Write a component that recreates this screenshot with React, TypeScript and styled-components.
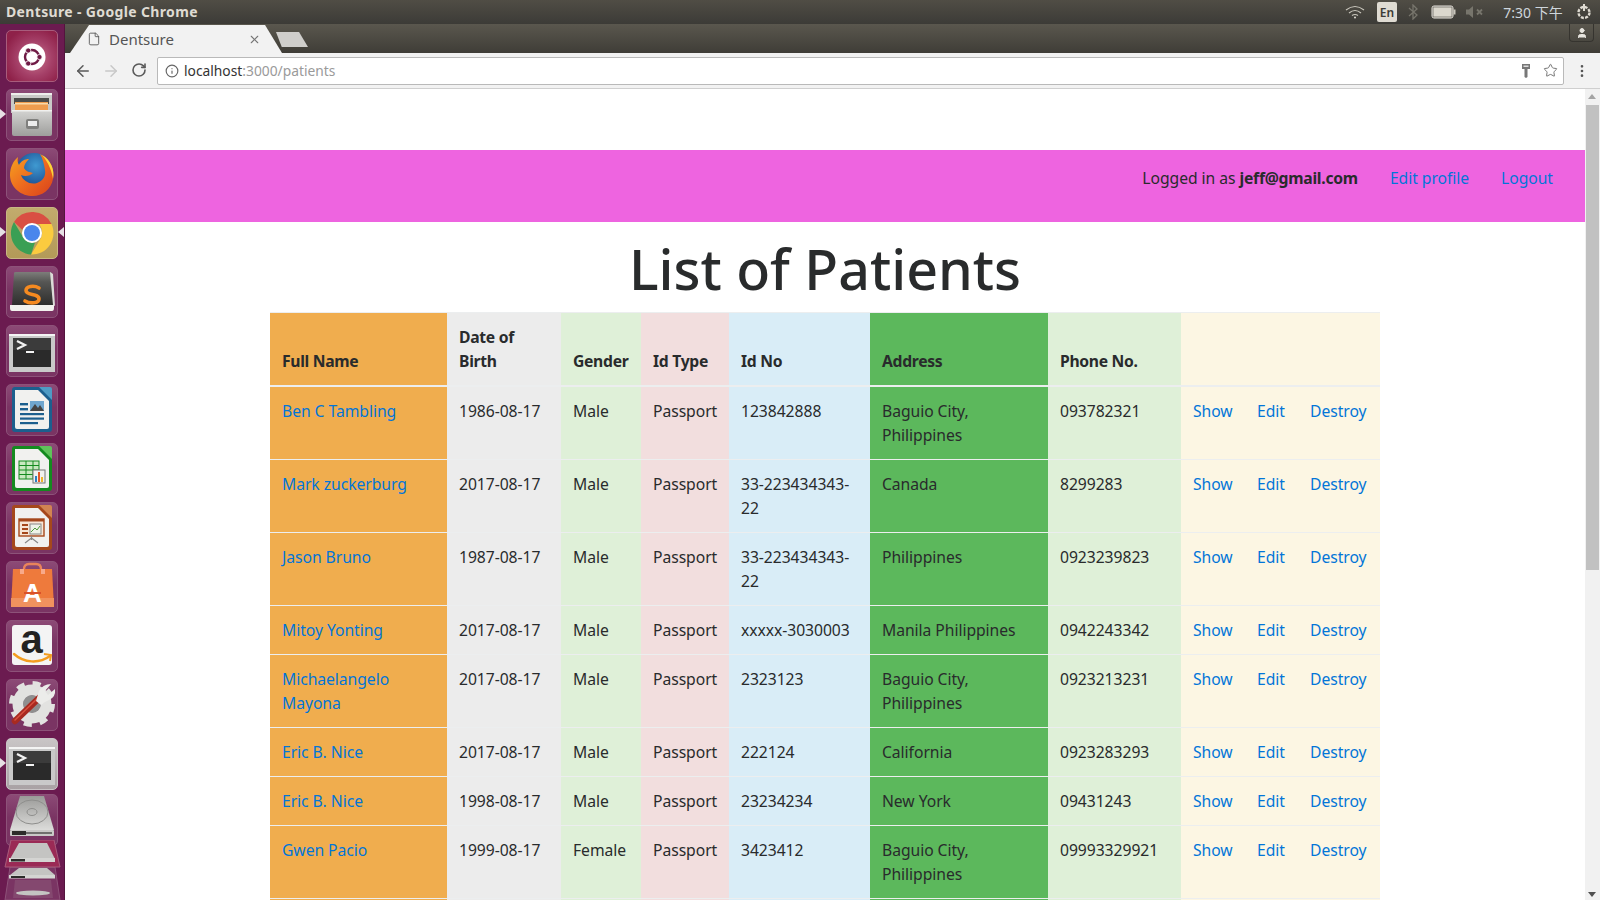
import React from "react";
import styled, {createGlobalStyle, css} from "styled-components";
import {ArrowLeft, ArrowRight, RotateCw, Info, Star, X, MoreVertical, File, User} from "lucide-react";

const uiFont = `"Noto Sans", "Open Sans", sans-serif`;

const GlobalStyle = createGlobalStyle`
  html, body {
    margin: 0;
    padding: 0;
    background: #fff;
  }
  * {
    box-sizing: border-box;
  }
`

const Screen = styled.div`
  width: 1600px;
  height: 900px;
  overflow: hidden;
  display: flex;
  flex-direction: column;
  font-family: ${uiFont};
`

const TopPanel = styled.div`
  height: 24px;
  flex: none;
  display: flex;
  align-items: center;
  justify-content: space-between;
  padding-left: 6px;
  background: linear-gradient(#504d45, #3c3b37);
  color: #dfdbd2;
`

const WindowTitle = styled.div`
  font-size: 14px;
  font-weight: 700;
  letter-spacing: 0.35px;
  padding-bottom: 2px;
`

const Indicators = styled.div`
  display: flex;
  align-items: center;
  height: 24px;
`

const Indicator = styled.div<{ $width: number }>`
  width: ${p => p.$width}px;
  display: flex;
  align-items: center;
  justify-content: center;
`

const LangBox = styled.div`
  width: 20px;
  height: 20px;
  border-radius: 2px;
  background: #dfdbd2;
  color: #3c3b37;
  font-size: 12px;
  font-weight: 600;
  display: flex;
  align-items: center;
  justify-content: center;
`

const Clock = styled.div`
  width: 83px;
  padding-left: 13px;
  font-size: 14px;
  color: #cfd6dc;
  font-family: "Noto Sans", "Noto Sans CJK TC", sans-serif;
  text-align: center;
  white-space: nowrap;
`

const Desktop = styled.div`
  flex: 1;
  min-height: 0;
  display: flex;
`

const Launcher = styled.div`
  width: 65px;
  flex: none;
  background: #6b1b50;
  border-right: 1px solid #54143e;
  display: flex;
  flex-direction: column;
  gap: 7px;
  padding: 6px 0 0 6px;
  overflow: hidden;
`

const tileTones = {
    plain: css`
      background: linear-gradient(#8c4a76, #7a3463 45%, #7a3463);
      border: 1px solid #8d5279;
    `,
    ubuntu: css`
      background: radial-gradient(circle at 55% 55%, #c9788f, #a54068 45%, #8f2149 80%);
      border: 1px solid #a85c7c;
    `,
    gold: css`
      background: linear-gradient(#c2ab6d, #b39a58);
      border: 1px solid #c8b684;
    `,
    active: css`
      background: linear-gradient(#c9c5c6, #a9a2a4);
      border: 1px solid #c9c5c6;
    `,
}

const Tile = styled.div<{ $tone?: keyof typeof tileTones; $left?: boolean; $right?: boolean; $tight?: boolean }>`
  position: relative;
  width: 52px;
  height: 52px;
  flex: none;
  border-radius: 5px;
  margin-top: ${p => p.$tight ? "-3px" : "0"};
  ${p => tileTones[p.$tone ?? "plain"]}
  svg {
    display: block;
    position: absolute;
    left: -1px;
    top: -1px;
    overflow: visible;
  }
  ${p => p.$left && css`
    &::before {
      content: "";
      position: absolute;
      left: -7px;
      top: 19px;
      border: 5px solid transparent;
      border-left: 6px solid #e6e0e4;
    }
  `}
  ${p => p.$right && css`
    &::after {
      content: "";
      position: absolute;
      right: -7px;
      top: 19px;
      border: 5px solid transparent;
      border-right: 6px solid #e6e0e4;
    }
  `}
`

const FoldedStack = styled.svg`
  display: block;
  flex: none;
  position: relative;
  margin: -13px 0 0 -3px;
`

const Browser = styled.div`
  flex: 1;
  min-width: 0;
  display: flex;
  flex-direction: column;
`

const TabStrip = styled.div`
  position: relative;
  height: 29px;
  flex: none;
  display: flex;
  align-items: flex-end;
  padding-left: 5px;
  background: linear-gradient(#5a574e, #3f3d37);
`

const Tab = styled.div`
  width: 212px;
  height: 28px;
  display: flex;
  align-items: center;
  padding: 0 21px 0 17px;
  background: #f2f2f2;
  clip-path: polygon(0 100%, 9% 0, 92% 0, 100% 100%);
  color: #555;
  font-size: 15px;
  gap: 8px;
`

const TabTitle = styled.span`
  flex: 1;
`

const NewTab = styled.div`
  width: 32px;
  height: 15px;
  margin: 0 0 6px -6px;
  background: #cfcecb;
  clip-path: polygon(0 0, 72% 0, 100% 100%, 18% 100%);
`

const ProfileButton = styled.div`
  position: absolute;
  right: 6px;
  top: 0;
  width: 25px;
  height: 18px;
  border: 1px solid #36342f;
  border-top: none;
  border-radius: 0 0 4px 4px;
  color: #e8e6e0;
  display: flex;
  align-items: center;
  justify-content: center;
`

const Toolbar = styled.div`
  height: 36px;
  flex: none;
  display: flex;
  align-items: center;
  background: #f2f2f2;
  border-bottom: 1px solid #cfcfcf;
`

const NavButton = styled.div<{ $off?: boolean }>`
  width: 28px;
  display: flex;
  justify-content: center;
  color: ${p => p.$off ? "#c8c8c8" : "#5a5a5a"};
`

const NavButtons = styled.div`
  display: flex;
  padding-left: 4px;
  width: 92px;
  flex: none;
`

const Omnibox = styled.div`
  width: 1407px;
  height: 28px;
  flex: none;
  display: flex;
  align-items: center;
  background: #fff;
  border: 1px solid #b9b9b9;
  border-radius: 2px;
  padding: 0 5px 0 7px;
  font-size: 13.8px;
  color: #9a9a9a;
  gap: 5px;
`

const UrlText = styled.div`
  flex: 1;
`

const UrlHost = styled.span`
  color: #333;
`

const KeySlot = styled.div`
  display: flex;
  margin-right: 7px;
`

const MenuButton = styled.div`
  flex: 1;
  display: flex;
  justify-content: center;
  color: #555;
`

const Viewport = styled.div`
  flex: 1;
  min-height: 0;
  display: flex;
`

const Page = styled.div`
  flex: 1;
  min-width: 0;
  padding-top: 61px;
  overflow: hidden;
  color: #292b2c;
  font-size: 15.7px;
  letter-spacing: -0.05px;
  line-height: 24px;
`

const Navbar = styled.nav`
  height: 72px;
  background: #ee64e0;
  display: flex;
  justify-content: flex-end;
  gap: 32px;
  padding: 16px 32px 0 0;
`

const NavText = styled.span`
  strong {
    font-weight: 700;
    letter-spacing: -0.25px;
  }
`

const Link = styled.a`
  color: #0275d8;
  text-decoration: none;
`

const Heading = styled.h1`
  margin: 0;
  height: 90px;
  padding-top: 16px;
  font-size: 55.5px;
  line-height: 62px;
  font-weight: 500;
  letter-spacing: 0;
  text-align: center;
`

const Table = styled.table`
  margin-left: 205px;
  width: 1110px;
  table-layout: fixed;
  border-collapse: collapse;
  border-top: 1px solid #eceeef;
`

const cellTones = {
    orange: "#f0ad4e",
    grey: "#ececec",
    green: "#dff0d8",
    red: "#f2dede",
    blue: "#d9edf7",
    strong: "#5cb85c",
    cream: "#fcf6e3",
}

type Tone = keyof typeof cellTones;

const Col = styled.col<{ $width: number }>`
  width: ${p => p.$width}px;
`

const HeadCell = styled.th<{ $tone: Tone }>`
  padding: 12px;
  text-align: left;
  vertical-align: bottom;
  font-weight: 700;
  letter-spacing: -0.3px;
  background: ${p => cellTones[p.$tone]};
  border-bottom: 2px solid #eceeef;
`

const Cell = styled.td<{ $tone: Tone }>`
  padding: 12px;
  height: 49px;
  vertical-align: top;
  background: ${p => cellTones[p.$tone]};
  border-top: 1px solid #eceeef;
`

const Scrollbar = styled.div`
  width: 15px;
  flex: none;
  background: #f1f1f1;
  display: flex;
  flex-direction: column;
  align-items: center;
  padding-top: 16px;
  position: relative;
`

const ScrollThumb = styled.div`
  width: 13px;
  height: 465px;
  background: #c1c1c1;
`

const ScrollArrow = styled.div<{ $down?: boolean }>`
  position: absolute;
  left: 3px;
  border: 4px solid transparent;
  ${p => p.$down
    ? css`
      bottom: 3px;
      border-top: 5px solid #505050;
      border-bottom: none;
    `
    : css`
      top: 5px;
      border-bottom: 5px solid #a3a3a3;
      border-top: none;
    `}
`

const columns = [177, 114, 80, 88, 141, 178, 133, 64, 53, 82];
const rowTones: Tone[] = ["orange", "grey", "green", "red", "blue", "strong", "green", "cream", "cream", "cream"];

const patients = [
    {id: 1, name: "Ben C Tambling", dob: "1986-08-17", gender: "Male", idNo: "123842888", address: "Baguio City, Philippines", phone: "093782321"},
    {id: 2, name: "Mark zuckerburg", dob: "2017-08-17", gender: "Male", idNo: "33-223434343-22", address: "Canada", phone: "8299283"},
    {id: 3, name: "Jason Bruno", dob: "1987-08-17", gender: "Male", idNo: "33-223434343-22", address: "Philippines", phone: "0923239823"},
    {id: 4, name: "Mitoy Yonting", dob: "2017-08-17", gender: "Male", idNo: "xxxxx-3030003", address: "Manila Philippines", phone: "0942243342"},
    {id: 5, name: "Michaelangelo Mayona", dob: "2017-08-17", gender: "Male", idNo: "2323123", address: "Baguio City, Philippines", phone: "0923213231"},
    {id: 6, name: "Eric B. Nice", dob: "2017-08-17", gender: "Male", idNo: "222124", address: "California", phone: "0923283293"},
    {id: 7, name: "Eric B. Nice", dob: "1998-08-17", gender: "Male", idNo: "23234234", address: "New York", phone: "09431243"},
    {id: 8, name: "Gwen Pacio", dob: "1999-08-17", gender: "Female", idNo: "3423412", address: "Baguio City, Philippines", phone: "09993329921"},
];

const UbuntuIcon = () => (
    <svg width="52" height="52" viewBox="0 0 52 52">
        <circle cx="26" cy="27" r="13.500" fill="#fff"/>
        <circle cx="26" cy="27" r="7" fill="none" stroke="#6f1a45" strokeWidth="2.400"/>
        <circle cx="33.500" cy="27" r="2.600" fill="#6f1a45" stroke="#fff" strokeWidth="0.800"/>
        <circle cx="22.200" cy="20.500" r="2.600" fill="#6f1a45" stroke="#fff" strokeWidth="0.800"/>
        <circle cx="22.200" cy="33.500" r="2.600" fill="#6f1a45" stroke="#fff" strokeWidth="0.800"/>
    </svg>
);

const FilesIcon = () => (
    <svg width="52" height="52" viewBox="0 0 52 52">
        <defs>
            <linearGradient id="cabinetFront" x1="0" y1="0" x2="0" y2="1">
                <stop offset="0" stopColor="#d4d4d2"/>
                <stop offset="1" stopColor="#9e9e9c"/>
            </linearGradient>
        </defs>
        <path d="M5 6 Q5 4 7 4 H44 Q46 4 46 6 V24 H5 Z" fill="#c9c9c7"/>
        <rect x="5" y="4" width="41" height="2" fill="#eeeeec"/>
        <rect x="8" y="9" width="35" height="6" fill="#4c4c4a"/>
        <rect x="9" y="13" width="33" height="8" fill="#ee9c4e"/>
        <rect x="9" y="14" width="33" height="1.500" fill="#f8d8a8"/>
        <path d="M6 21 H46 V45 Q46 47 44 47 H8 Q6 47 6 45 Z" fill="url(#cabinetFront)"/>
        <rect x="6" y="21" width="40" height="1.500" fill="#f0f0ee"/>
        <rect x="20" y="30" width="13" height="10" rx="2" fill="#7f7f7d"/>
        <rect x="22" y="32" width="9" height="5" fill="#ededed"/>
    </svg>
);

const FirefoxIcon = () => (
    <svg width="52" height="52" viewBox="0 0 52 52">
        <defs>
            <radialGradient id="foxGlobe" cx="0.55" cy="0.35" r="0.7">
                <stop offset="0" stopColor="#3f9ad1"/>
                <stop offset="1" stopColor="#153f86"/>
            </radialGradient>
            <linearGradient id="foxBody" x1="0" y1="0" x2="1" y2="1">
                <stop offset="0" stopColor="#f6a61f"/>
                <stop offset="0.5" stopColor="#ee6b1f"/>
                <stop offset="1" stopColor="#d8401b"/>
            </linearGradient>
        </defs>
        <circle cx="28" cy="23" r="18" fill="url(#foxGlobe)"/>
        <path d="M34 6 C44 11 49 21 47 31 C45 42 35 49 25 48 C13 47 4 38 4 27 C4 20 7 13 12 9 C11 13 12 15 13 17 C15 13 19 11 23 11 C20 14 18 17 18 20 C20 24 24 24 27 25 C24 28 19 29 15 27 C17 33 24 37 31 35 C37 33 40 28 39 22 C38 16 37 11 34 6 Z" fill="url(#foxBody)"/>
        <path d="M36 7 C45 12 49 22 47 31 C46 24 43 15 36 7 Z" fill="#fbd33a"/>
    </svg>
);

const ChromeIcon = () => (
    <svg width="52" height="52" viewBox="0 0 52 52">
        <path d="M8 15 A21.500 21.500 0 0 1 45.500 17 L26 17 C21 17 17.500 20 16.500 23 Z" fill="#d94f43"/>
        <path d="M45.500 17 A21.500 21.500 0 0 1 25 47.500 L35 31 C37 27 36.500 21 33 17 Z" fill="#fbcb3f"/>
        <path d="M25 47.500 A21.500 21.500 0 0 1 8 15 L17.500 31 C20 35 25 36.500 29 35.500 Z" fill="#3a9f54"/>
        <circle cx="26" cy="26" r="10" fill="#fff"/>
        <circle cx="26" cy="26" r="8" fill="#4a86ec"/>
    </svg>
);

const SublimeIcon = () => (
    <svg width="52" height="52" viewBox="0 0 52 52">
        <defs>
            <linearGradient id="sublimeBox" x1="0" y1="0" x2="0" y2="1">
                <stop offset="0" stopColor="#7d7d7a"/>
                <stop offset="0.3" stopColor="#565654"/>
                <stop offset="1" stopColor="#2e2e2d"/>
            </linearGradient>
        </defs>
        <path d="M8 7 Q8 6 10 6 H44 Q46 6 46 8 L47 39 H6 Z" fill="url(#sublimeBox)"/>
        <path d="M44 6 L47 8 L49 40 L47 39 Z" fill="#dcdcd8"/>
        <path d="M4 39 H48 V42 Q48 45 46 45 H6 Q4 45 4 42 Z" fill="#f2f2ee"/>
        <path d="M33 22 C28 19 20 20 20 24.500 C20 30 33 27 33 33 C33 37.500 24 38 19 35" fill="none" stroke="#f58a20" strokeWidth="3.600" strokeLinecap="round"/>
    </svg>
);

const TerminalIcon = () => (
    <svg width="52" height="52" viewBox="0 0 52 52">
        <rect x="3" y="9" width="46" height="38" fill="#c9c9c9"/>
        <rect x="3" y="9" width="46" height="2" fill="#f4f4f4"/>
        <rect x="7" y="13" width="38" height="29" fill="#2a2a2a"/>
        <rect x="7" y="13" width="38" height="12" fill="#3b3b3b"/>
        <path d="M11 16 L19 20 L11 24" fill="none" stroke="#f2f2f2" strokeWidth="2.200"/>
        <rect x="20" y="26" width="8" height="2" fill="#f2f2f2"/>
    </svg>
);

const OfficeDoc = ({frame, corner, children}: { frame: string; corner: string; children?: React.ReactNode }) => (
    <svg width="52" height="52" viewBox="0 0 52 52">
        <path d="M6 6 Q6 3 9 3 H34 L46 15 V45 Q46 48 43 48 H9 Q6 48 6 45 Z" fill={frame}/>
        <path d="M33 3 H44 Q46 3 46 5 V16 Z" fill={corner}/>
        <path d="M9 6 H32 L43 17 V43 Q43 45 41 45 H11 Q9 45 9 43 Z" fill="#f1f1ef"/>
        {children}
    </svg>
);

const WriterIcon = () => (
    <OfficeDoc frame="#1c5f8e" corner="#4f9bc4">
        <rect x="14" y="19" width="8" height="2.400" fill="#1c5f8e"/>
        <rect x="14" y="24" width="8" height="2.400" fill="#1c5f8e"/>
        <rect x="14" y="29" width="24" height="2.200" fill="#1c5f8e"/>
        <rect x="14" y="33.500" width="24" height="2.200" fill="#1c5f8e"/>
        <rect x="14" y="38" width="18" height="2.200" fill="#1c5f8e"/>
        <rect x="24" y="17" width="14" height="10" fill="#6fa6cf"/>
        <path d="M24 27 L29 20 L32 24 L34 21 L38 27 Z" fill="#444"/>
    </OfficeDoc>
);

const CalcIcon = () => (
    <OfficeDoc frame="#148a1f" corner="#5fc25a">
        <rect x="13" y="18" width="20" height="18" fill="#c9e8c0" stroke="#148a1f"/>
        <path d="M13 22.500 H33 M13 27 H33 M13 31.500 H33 M20 18 V36 M27 18 V36" stroke="#148a1f"/>
        <rect x="27" y="27" width="12" height="13" fill="#f1f1ef" stroke="#777"/>
        <rect x="29" y="33" width="2" height="6" fill="#2a7fc2"/>
        <rect x="32" y="29" width="2" height="10" fill="#e2592b"/>
        <rect x="35" y="34" width="2" height="5" fill="#f0b429"/>
    </OfficeDoc>
);

const ImpressIcon = () => (
    <OfficeDoc frame="#a5481c" corner="#d18452">
        <rect x="13" y="17" width="25" height="17" fill="#f7e6d6" stroke="#a5481c" strokeWidth="1.400"/>
        <rect x="13" y="17" width="25" height="2.500" fill="#a5481c"/>
        <rect x="16" y="22" width="6" height="2" fill="#a5481c"/>
        <rect x="16" y="26" width="6" height="2" fill="#a5481c"/>
        <rect x="16" y="30" width="6" height="2" fill="#a5481c"/>
        <rect x="24" y="22" width="11" height="10" fill="#eef3e8" stroke="#888"/>
        <path d="M25 30 L29 26 L31 28 L34 24" fill="none" stroke="#4f9a3a"/>
        <path d="M25.500 34 V38 M25.500 36 L19 41 M25.500 36 L32 41" stroke="#888" strokeWidth="1.200" fill="none"/>
    </OfficeDoc>
);

const SoftwareIcon = () => (
    <svg width="52" height="52" viewBox="0 0 52 52">
        <path d="M18 12 V8 Q18 3 23 3 H30 Q35 3 35 8 V12" fill="none" stroke="#e9835a" strokeWidth="2.400"/>
        <path d="M7 8 H46 L48 46 H5 Z" fill="#ee7a3c"/>
        <rect x="5" y="37" width="43" height="9" fill="#f0925e"/>
        <rect x="14" y="8" width="4" height="5" fill="#f8a98a"/>
        <rect x="35" y="8" width="4" height="5" fill="#f8a98a"/>
        <text x="26.500" y="41" textAnchor="middle" fontFamily="'Liberation Sans', sans-serif" fontWeight="700" fontSize="26" fill="#fff">A</text>
        <rect x="18" y="31" width="17" height="2" fill="#d9522a"/>
    </svg>
);

const AmazonIcon = () => (
    <svg width="52" height="52" viewBox="0 0 52 52">
        <rect x="6" y="5" width="40" height="40" rx="3" fill="#f4f4f4"/>
        <text x="25.500" y="33" textAnchor="middle" fontFamily="'Liberation Sans', sans-serif" fontWeight="700" fontSize="40" fill="#222">a</text>
        <path d="M8 34 C18 43 33 44 44 36" fill="none" stroke="#f39c1f" strokeWidth="2.400" strokeLinecap="round"/>
        <path d="M38 34 L45 35 L44 41" fill="none" stroke="#f39c1f" strokeWidth="2"/>
    </svg>
);

const SettingsIcon = () => (
    <svg width="52" height="52" viewBox="0 0 52 52">
        <circle cx="26" cy="25" r="14" fill="none" stroke="#e2e2e0" strokeWidth="11"/>
        <circle cx="26" cy="25" r="20.500" fill="none" stroke="#e2e2e0" strokeWidth="5" strokeDasharray="8 8.100"/>
        <circle cx="26" cy="25" r="9" fill="#8f8f8f"/>
        <path d="M9 42 L33 19" stroke="#a82a20" strokeWidth="6.500" strokeLinecap="round"/>
        <path d="M9 41 L33 18" stroke="#d8503e" strokeWidth="1.500" strokeLinecap="round"/>
        <path d="M30 22 L33 12 Q37 5 45 5 L39 12 L42 16 L49 10 Q50 18 43 21 Q38 23 35 26 Z" fill="#ececea"/>
    </svg>
);

const DiskIcon = () => (
    <svg width="52" height="52" viewBox="0 0 52 52">
        <defs>
            <linearGradient id="diskTop" x1="0" y1="0" x2="0" y2="1">
                <stop offset="0" stopColor="#9a9a98"/>
                <stop offset="1" stopColor="#dcdcda"/>
            </linearGradient>
        </defs>
        <path d="M14 2 H38 L48 36 H4 Z" fill="url(#diskTop)"/>
        <ellipse cx="26" cy="18" rx="16" ry="12" fill="none" stroke="#8e8e8c"/>
        <ellipse cx="26" cy="18" rx="5" ry="3.500" fill="none" stroke="#8e8e8c"/>
        <rect x="4" y="36" width="44" height="6" rx="1" fill="#c9c9c7"/>
        <rect x="6" y="37" width="14" height="4" fill="#2c2c2a"/>
        <rect x="20" y="38" width="26" height="2" fill="#6f6f6d"/>
    </svg>
);

const Folded = () => (
    <FoldedStack width="62" height="60" viewBox="0 0 62 60">
        <path d="M2 60 L7 27 H52 L57 60 Z" fill="#7a3463" stroke="#8d5279"/>
        <path d="M8 0 H51 L57 27 H2 Z" fill="#9a2a55" stroke="#a85c7c"/>
        <path d="M16 3 H44 L52 19 H7 Z" fill="#c4c4c2"/>
        <rect x="6" y="18" width="46" height="4" fill="#d4d4d2"/>
        <rect x="8" y="19" width="14" height="2.500" fill="#2c2c2a"/>
        <path d="M16 28 H44 L52 35 H7 Z" fill="#c4c4c2"/>
        <rect x="6" y="35" width="46" height="3.500" fill="#d4d4d2"/>
        <rect x="8" y="36" width="14" height="2" fill="#2c2c2a"/>
        <path d="M12 40 H48 L50 58 H10 Z" fill="#84486f"/>
        <ellipse cx="30" cy="53" rx="17" ry="2.500" fill="#c4c4c2"/>
    </FoldedStack>
);

const launcherItems: Array<{ key: string; tone?: keyof typeof tileTones; left?: boolean; right?: boolean; tight?: boolean; icon: React.ReactElement }> = [
    {key: "ubuntu", tone: "ubuntu", icon: <UbuntuIcon/>},
    {key: "files", left: true, icon: <FilesIcon/>},
    {key: "firefox", icon: <FirefoxIcon/>},
    {key: "chrome", tone: "gold", left: true, right: true, icon: <ChromeIcon/>},
    {key: "sublime", icon: <SublimeIcon/>},
    {key: "terminal", icon: <TerminalIcon/>},
    {key: "writer", icon: <WriterIcon/>},
    {key: "calc", icon: <CalcIcon/>},
    {key: "impress", icon: <ImpressIcon/>},
    {key: "software", icon: <SoftwareIcon/>},
    {key: "amazon", icon: <AmazonIcon/>},
    {key: "settings", icon: <SettingsIcon/>},
    {key: "terminal2", tone: "active", left: true, icon: <TerminalIcon/>},
    {key: "disk", tight: true, icon: <DiskIcon/>},
];

const WifiGlyph = () => (
    <svg width="20" height="14" viewBox="0 0 20 14" fill="none" stroke="#c9c6bc" strokeWidth="1.200">
        <path d="M1 5 Q10 -2 19 5"/>
        <path d="M4 8 Q10 3 16 8"/>
        <path d="M7 10.500 Q10 8.500 13 10.500"/>
        <circle cx="10" cy="12.500" r="1" fill="#dfdbd2" stroke="none"/>
    </svg>
);

const BluetoothGlyph = () => (
    <svg width="10" height="16" viewBox="0 0 10 16" fill="none" stroke="#77756c" strokeWidth="1.300">
        <path d="M1 4 L9 11 L5 15 V1 L9 5 L1 12"/>
    </svg>
);

const BatteryGlyph = () => (
    <svg width="25" height="14" viewBox="0 0 25 14">
        <rect x="1" y="1" width="21" height="12" rx="2" fill="#dfdbd2" stroke="#e8e5dd"/>
        <rect x="2" y="2" width="19" height="10" fill="#dbd7cd" stroke="#4a4842" strokeWidth="0.600"/>
        <rect x="22.500" y="4.500" width="2" height="5" fill="#c9c6bc"/>
    </svg>
);

const MuteGlyph = () => (
    <svg width="18" height="12" viewBox="0 0 18 12" fill="#77756c">
        <path d="M0 3.500 H3 L7 0 V12 L3 8.500 H0 Z"/>
        <path d="M11 3.500 L16 8.500 M16 3.500 L11 8.500" stroke="#77756c" strokeWidth="1.800"/>
    </svg>
);

const PowerGlyph = () => (
    <svg width="18" height="18" viewBox="0 0 18 18" fill="none" stroke="#dfdbd2">
        <circle cx="9" cy="9.500" r="5.500" strokeWidth="2.400" strokeDasharray="3 1.300"/>
        <path d="M9 1 V8" strokeWidth="2"/>
    </svg>
);

const KeyGlyph = () => (
    <svg width="10" height="16" viewBox="0 0 10 16">
        <path d="M1 1 H9 V6 H6.500 V14 L5 15 L3.500 14 V6 H1 Z" fill="#777"/>
        <rect x="2.500" y="2.500" width="5" height="1.500" fill="#ddd"/>
    </svg>
);

export default function App() {
    return (
        <>
            <GlobalStyle/>
            <Screen>
                <TopPanel>
                    <WindowTitle>Dentsure - Google Chrome</WindowTitle>
                    <Indicators>
                        <Indicator $width={28}><WifiGlyph/></Indicator>
                        <Indicator $width={36}><LangBox>En</LangBox></Indicator>
                        <Indicator $width={16}><BluetoothGlyph/></Indicator>
                        <Indicator $width={44}><BatteryGlyph/></Indicator>
                        <Indicator $width={20}><MuteGlyph/></Indicator>
                        <Clock>7:30 下午</Clock>
                        <Indicator $width={32}><PowerGlyph/></Indicator>
                    </Indicators>
                </TopPanel>
                <Desktop>
                    <Launcher>
                        {launcherItems.map(item => (
                            <Tile key={item.key} $tone={item.tone} $left={item.left} $right={item.right} $tight={item.tight}>
                                {item.icon}
                            </Tile>
                        ))}
                        <Folded/>
                    </Launcher>
                    <Browser>
                        <TabStrip>
                            <Tab>
                                <File size={14} strokeWidth={1.5}/>
                                <TabTitle>Dentsure</TabTitle>
                                <X size={13} color="#777"/>
                            </Tab>
                            <NewTab/>
                            <ProfileButton><User size={12} fill="currentColor"/></ProfileButton>
                        </TabStrip>
                        <Toolbar>
                            <NavButtons>
                                <NavButton><ArrowLeft size={18}/></NavButton>
                                <NavButton $off><ArrowRight size={18}/></NavButton>
                                <NavButton><RotateCw size={16} strokeWidth={2.4}/></NavButton>
                            </NavButtons>
                            <Omnibox>
                                <Info size={14} color="#666"/>
                                <UrlText><UrlHost>localhost</UrlHost>:3000/patients</UrlText>
                                <KeySlot><KeyGlyph/></KeySlot>
                                <Star size={15} color="#777" strokeWidth={1.6}/>
                            </Omnibox>
                            <MenuButton><MoreVertical size={16}/></MenuButton>
                        </Toolbar>
                        <Viewport>
                            <Page>
                                <Navbar>
                                    <NavText>Logged in as <strong>jeff@gmail.com</strong></NavText>
                                    <Link href="#">Edit profile</Link>
                                    <Link href="#">Logout</Link>
                                </Navbar>
                                <Heading>List of Patients</Heading>
                                <Table>
                                    <colgroup>
                                        {columns.map((width, index) => <Col key={index} $width={width}/>)}
                                    </colgroup>
                                    <thead>
                                    <tr>
                                        <HeadCell $tone="orange">Full Name</HeadCell>
                                        <HeadCell $tone="grey">Date of Birth</HeadCell>
                                        <HeadCell $tone="green">Gender</HeadCell>
                                        <HeadCell $tone="red">Id Type</HeadCell>
                                        <HeadCell $tone="blue">Id No</HeadCell>
                                        <HeadCell $tone="strong">Address</HeadCell>
                                        <HeadCell $tone="green">Phone No.</HeadCell>
                                        <HeadCell $tone="cream" colSpan={3}/>
                                    </tr>
                                    </thead>
                                    <tbody>
                                    {patients.map(row => (
                                        <tr key={row.id}>
                                            <Cell $tone="orange"><Link href="#">{row.name}</Link></Cell>
                                            <Cell $tone="grey">{row.dob}</Cell>
                                            <Cell $tone="green">{row.gender}</Cell>
                                            <Cell $tone="red">Passport</Cell>
                                            <Cell $tone="blue">{row.idNo}</Cell>
                                            <Cell $tone="strong">{row.address}</Cell>
                                            <Cell $tone="green">{row.phone}</Cell>
                                            <Cell $tone="cream"><Link href="#">Show</Link></Cell>
                                            <Cell $tone="cream"><Link href="#">Edit</Link></Cell>
                                            <Cell $tone="cream"><Link href="#">Destroy</Link></Cell>
                                        </tr>
                                    ))}
                                    {/* the next row only shows its top pixel above the fold */}
                                    <tr>
                                        {rowTones.map((tone, index) => <Cell key={index} $tone={tone}/>)}
                                    </tr>
                                    </tbody>
                                </Table>
                            </Page>
                            <Scrollbar>
                                <ScrollArrow/>
                                <ScrollThumb/>
                                <ScrollArrow $down/>
                            </Scrollbar>
                        </Viewport>
                    </Browser>
                </Desktop>
            </Screen>
        </>
    );
}
